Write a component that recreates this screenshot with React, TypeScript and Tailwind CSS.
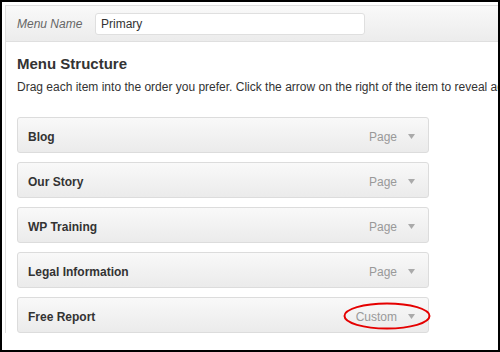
import React from "react";

// ============================================================================
// DATA
// ============================================================================

const menuItems = [
  { title: "Blog", type: "Page" },
  { title: "Our Story", type: "Page" },
  { title: "WP Training", type: "Page" },
  { title: "Legal Information", type: "Page" },
  { title: "Free Report", type: "Custom", highlight: true },
];

// ============================================================================
// MENU ITEM
// ============================================================================

interface MenuItemProps {
  title: string;
  type: string;
  highlight?: boolean;
}

const MenuItem: React.FC<MenuItemProps> = ({ title, type, highlight }) => (
  <div className="relative flex h-[36px] w-[412px] items-center justify-between rounded-[3px] border border-[#dcdcdc] bg-gradient-to-b from-[#f9f9f9] to-[#ebebeb] pl-[10px] pr-[13px] pt-[3px]">
    <span className="text-[12px] font-bold leading-[14px] text-[#333]">{title}</span>
    <span className="flex items-center gap-[11px]">
      <span className="text-[12px] leading-[14px] text-[#999]">{type}</span>
      <svg width="7" height="5" viewBox="0 0 7 5" className="mt-[-1px]">
        <polygon points="0,0 7,0 3.5,5" fill="#aaa" />
      </svg>
    </span>
    {highlight && (
      <svg
        width="88"
        height="28"
        viewBox="0 0 88 28"
        className="absolute left-[325px] top-[4px]"
      >
        <ellipse cx="44" cy="14" rx="42.5" ry="12.5" fill="none" stroke="#e50000" strokeWidth="2" />
      </svg>
    )}
  </div>
);

// ============================================================================
// MAIN APP COMPONENT
// ============================================================================

function App() {
  return (
    <div
      className="h-[352px] w-[500px] overflow-hidden border-2 border-black bg-white pl-[3px] pt-[3px]"
      style={{ fontFamily: '"Liberation Sans", Arial, sans-serif' }}
    >
      <div className="w-[540px] border-l border-t border-[#dfdfdf]">
        {/* Header */}
        <div className="flex h-[36px] items-center border-b border-[#dfdfdf] bg-gradient-to-b from-[#f9f9f9] to-[#ececec] pl-[11px]">
          <span className="w-[78px] text-[12px] italic text-[#666]">Menu Name</span>
          <div className="flex h-[22px] w-[270px] items-center rounded-[3px] border border-[#dfdfdf] bg-white pl-[5px] text-[12px] text-[#333]">
            Primary
          </div>
        </div>

        {/* Body */}
        <div className="pl-[11px] pt-[13px]">
          <h3 className="text-[15px] font-bold leading-[18px] text-[#333]">Menu Structure</h3>
          <p className="mt-[7px] whitespace-nowrap text-[12px] leading-[14px] text-[#333]">
            Drag each item into the order you prefer. Click the arrow on the right of the item to reveal additional configuration options.
          </p>
          <div className="mt-[23px] flex flex-col gap-[9px]">
            {menuItems.map((item) => (
              <MenuItem key={item.title} {...item} />
            ))}
          </div>
        </div>
      </div>
    </div>
  );
}

export default App;
